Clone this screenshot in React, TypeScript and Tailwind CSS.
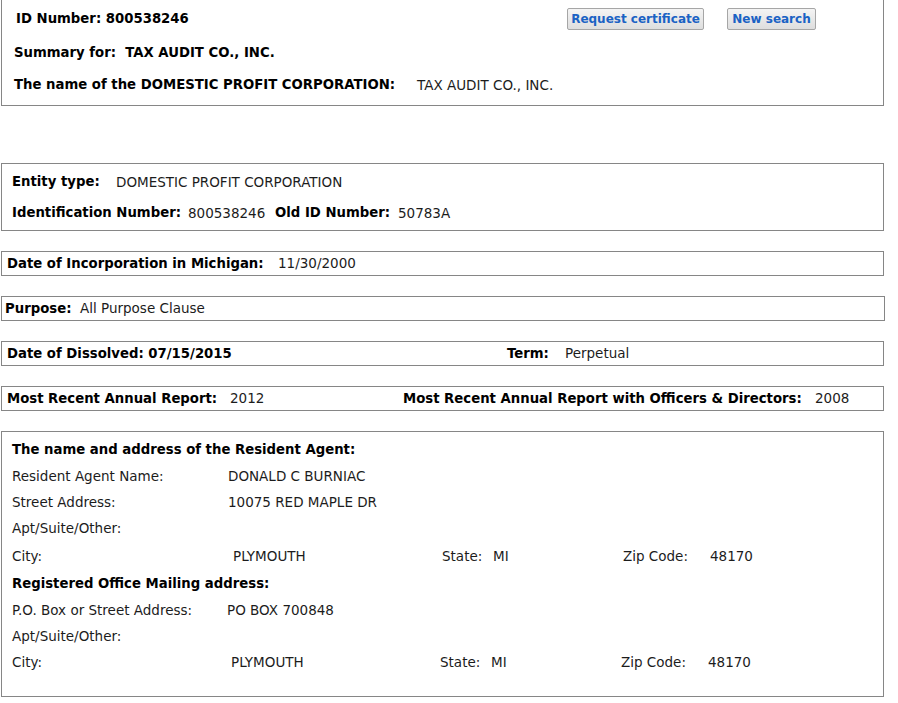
const font = { fontFamily: '"DejaVu Sans", Verdana, sans-serif' }

function Box({ children, className = "" }: { children: React.ReactNode; className?: string }) {
  return <div className={`border border-[#868686] ${className}`}>{children}</div>
}

function CityRow({ city, state, zip, shift = 0 }: { city: string; state: string; zip: string; shift?: number }) {
  return (
    <div className={`flex items-center ${shift ? "h-[26px]" : "h-[30px]"}`}>
      <span className={shift ? "w-[219px]" : "w-[221px]"}>City:</span>
      <span className="w-[209px]">{city}</span>
      <span className="w-[51px]">State:</span>
      <span className="w-[130px]">{state}</span>
      <span className="w-[87px]">Zip Code:</span>
      <span>{zip}</span>
    </div>
  )
}

export default function App() {
  return (
    <div style={font} className="bg-white w-[898px] h-[703px] text-[13.5px] text-[#1c1c1c] overflow-hidden whitespace-nowrap">
      <div className="ml-px w-[883px]">
        {/* summary header */}
        <div className="h-[106px] border-x border-b border-[#868686]">
          <div className="flex items-center h-[38px]">
            <span className="ml-[14px] w-[551px] font-bold text-black text-[13.25px]">ID Number: 800538246</span>
            <button className="h-[22px] w-[137px] bg-gradient-to-b from-[#f4f4f4] to-[#dedede] border border-[#a6a6a6] rounded-[2px] text-[#1a62c4] font-bold text-[12px]">
              Request certificate
            </button>
            <button className="ml-[23px] h-[22px] w-[89px] bg-gradient-to-b from-[#f4f4f4] to-[#dedede] border border-[#a6a6a6] rounded-[2px] text-[#1a62c4] font-bold text-[12px]">
              New search
            </button>
          </div>
          <div className="flex items-center h-[30px] pl-[12px] font-bold text-black text-[13.25px]">
            Summary for:&nbsp; TAX AUDIT CO., INC.
          </div>
          <div className="flex items-center h-[34px] pl-[12px]">
            <span className="w-[403px] font-bold text-black text-[13.25px]">The name of the DOMESTIC PROFIT CORPORATION:</span>
            <span>TAX AUDIT CO., INC.</span>
          </div>
        </div>

        <Box className="mt-[57px] h-[68px] pl-[10px]">
          <div className="flex items-center h-[36px]">
            <span className="w-[104px] font-bold text-black text-[13.25px]">Entity type:</span>
            <span>DOMESTIC PROFIT CORPORATION</span>
          </div>
          <div className="flex items-center h-[26px]">
            <span className="w-[176px] font-bold text-black text-[13.25px]">Identification Number:</span>
            <span className="w-[87px]">800538246</span>
            <span className="w-[123px] font-bold text-black text-[13.25px]">Old ID Number:</span>
            <span>50783A</span>
          </div>
        </Box>

        <Box className="mt-[20px] h-[25px] flex items-center pl-[5px]">
          <span className="w-[271px] font-bold text-black text-[13.25px]">Date of Incorporation in Michigan:</span>
          <span>11/30/2000</span>
        </Box>

        <Box className="mt-[20px] h-[25px] w-[884px] flex items-center pl-[3px]">
          <span className="w-[75px] font-bold text-black text-[13.25px]">Purpose:</span>
          <span>All Purpose Clause</span>
        </Box>

        <Box className="mt-[20px] h-[25px] flex items-center pl-[5px]">
          <span className="w-[500px] font-bold text-black text-[13.25px]">Date of Dissolved: 07/15/2015</span>
          <span className="w-[58px] font-bold text-black text-[13.25px]">Term:</span>
          <span>Perpetual</span>
        </Box>

        <Box className="mt-[20px] h-[25px] flex items-center pl-[5px]">
          <span className="w-[223px] font-bold text-black text-[13.25px]">Most Recent Annual Report:</span>
          <span className="w-[173px]">2012</span>
          <span className="w-[412px] font-bold text-black text-[13.25px]">Most Recent Annual Report with Officers &amp; Directors:</span>
          <span>2008</span>
        </Box>

        <Box className="mt-[20px] h-[266px] pt-[5px] pl-[10px]">
          <div className="flex items-center h-[26px] font-bold text-black text-[13.25px]">The name and address of the Resident Agent:</div>
          <div className="flex items-center h-[26px]">
            <span className="w-[216px]">Resident Agent Name:</span>
            <span>DONALD C BURNIAC</span>
          </div>
          <div className="flex items-center h-[26px]">
            <span className="w-[216px]">Street Address:</span>
            <span>10075 RED MAPLE DR</span>
          </div>
          <div className="flex items-center h-[26px]">Apt/Suite/Other:</div>
          <CityRow city="PLYMOUTH" state="MI" zip="48170" />
          <div className="flex items-center h-[26px] font-bold text-black text-[13.25px]">Registered Office Mailing address:</div>
          <div className="flex items-center h-[26px]">
            <span className="w-[215px]">P.O. Box or Street Address:</span>
            <span>PO BOX 700848</span>
          </div>
          <div className="flex items-center h-[26px]">Apt/Suite/Other:</div>
          <CityRow city="PLYMOUTH" state="MI" zip="48170" shift={1} />
        </Box>
      </div>
    </div>
  )
}
